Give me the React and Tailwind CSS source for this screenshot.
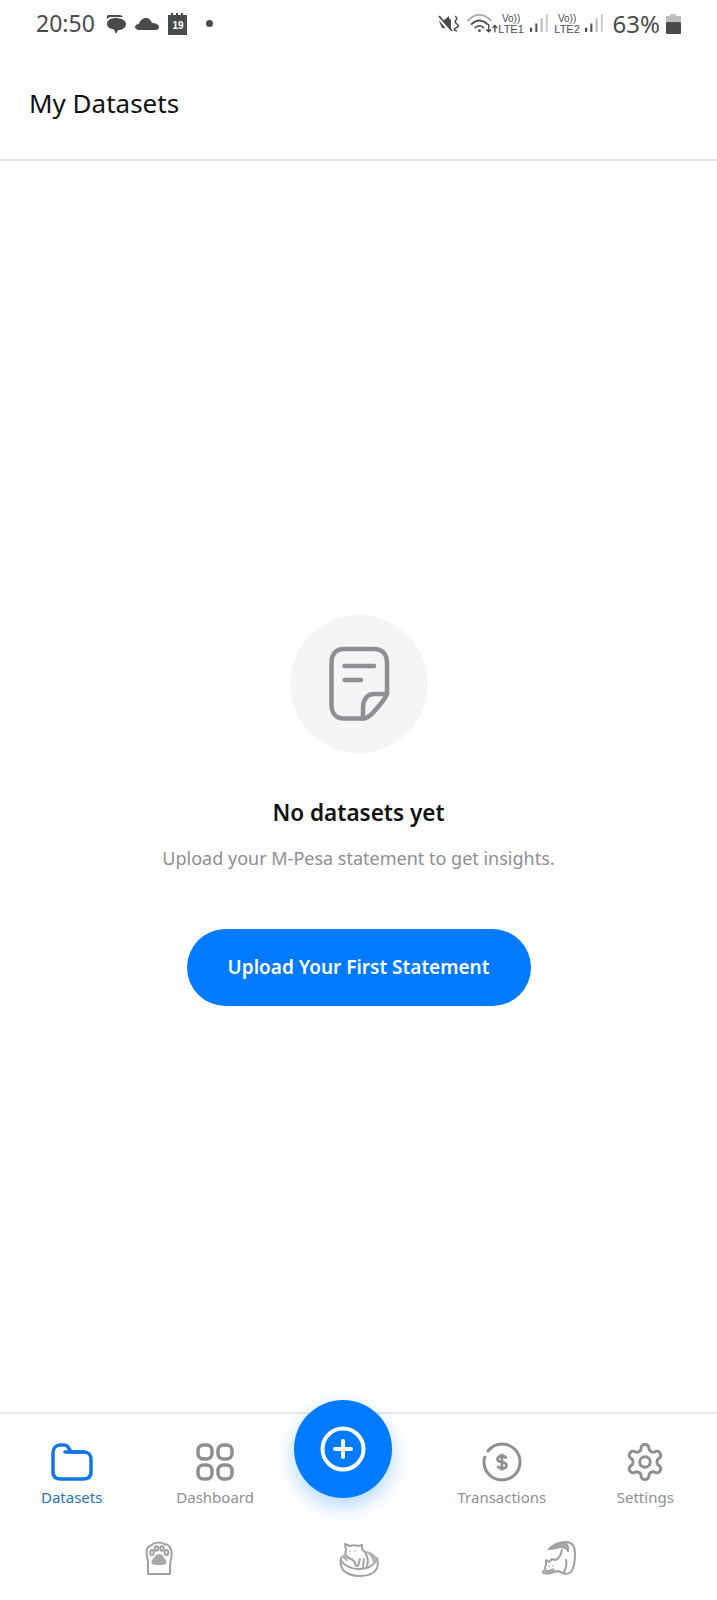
const font = "[font-family:'Noto_Sans',sans-serif]";

function Muted() {
  return (
    <svg width="22" height="20" viewBox="0 0 22 20">
      <path d="M1 7l4 0 6-5v2l2 2v12l-6-4H4z" fill="#4b4b4b" />
      <path d="M0 3l13 15" stroke="#fff" strokeWidth="3" />
      <path d="M1 2l13 15" stroke="#4b4b4b" strokeWidth="1.800" />
      <path d="M17 2q3 2 1 4t1 4-1 4 1 3" fill="none" stroke="#4b4b4b" strokeWidth="1.500" />
    </svg>
  );
}

function Wifi() {
  return (
    <svg width="31" height="21" viewBox="0 0 30 20" fill="none" strokeLinecap="round">
      <path d="M1 7C8 0 16 0 23 7" stroke="#a8a8a8" strokeWidth="1.800" />
      <path d="M4.500 10.500c5-4.500 10-4.500 15 0" stroke="#555" strokeWidth="1.800" />
      <path d="M8 14c3-2.500 5-2.500 8 0" stroke="#555" strokeWidth="1.800" />
      <circle cx="12" cy="17" r="1.400" fill="#555" />
      <path d="M21 11v7m-2-2 2 2 2-2" stroke="#444" strokeWidth="1.300" />
      <path d="M27 18v-6m-2 2 2-2 2 2" stroke="#444" strokeWidth="1.300" />
    </svg>
  );
}

function Signal() {
  return (
    <svg width="19" height="21" viewBox="0 0 18 20">
      <rect x="0" y="14" width="2" height="4" fill="#444" />
      <rect x="5" y="10" width="2" height="8" fill="#555" />
      <rect x="10" y="5" width="2" height="13" fill="#bbb" />
      <rect x="15" y="1" width="2" height="17" fill="#ccc" />
    </svg>
  );
}

function Vo({ n }) {
  return (
    <div className="flex w-[27px] flex-col items-center text-[11px] leading-[11px] text-[#4a4a4a] [font-family:'Liberation_Sans',sans-serif]">
      <span className="text-[10px]">Vo))</span>
      <span>{n}</span>
    </div>
  );
}

function Paw() {
  return (
    <svg width="30" height="36" viewBox="0 0 30 36" fill="none" stroke="#a0a0a0" strokeWidth="2">
      <path d="M4 33V20C1 10 3 5 8 4c2-3 9-3 12-1 6 0 9 6 7 15-1 3-1 4-1 15z" strokeLinejoin="round" />
      <ellipse cx="8" cy="11.500" rx="1.800" ry="2.600" />
      <ellipse cx="12.500" cy="7.500" rx="1.700" ry="2.200" />
      <ellipse cx="18" cy="7.500" rx="1.700" ry="2.200" />
      <ellipse cx="22.500" cy="11.500" rx="1.800" ry="2.600" />
      <path d="M15 13c4 0 4 3 6 5 3 3 1 6-3 6h-6c-4 0-6-3-3-6 2-2 2-5 6-5z" fill="#a8a8a8" stroke="none" />
    </svg>
  );
}

function CatBed() {
  return (
    <svg width="40" height="34" viewBox="0 0 40 34" fill="none" stroke="#a0a0a0" strokeWidth="2" strokeLinecap="round" strokeLinejoin="round">
      <path d="M2 15c-1 4 0 9 2 12 4 4 9 6 17 6 9 0 15-3 17-8 1-3 1-7 0-10" />
      <path d="M2 18c4 5 10 8 18 8 8 0 14-3 17-8" />
      <path d="M27 8c7 1 11 5 11 9l-4 5c0-6-3-11-9-13z" fill="#b4b4b4" stroke="none" />
      <path d="M7 7l-1-6 5 2c3-1 6-1 8 0l4-1 0 4c5 4 7 11 5 17" fill="#fff" />
      <path d="M7 7c-2 4 1 8 5 9 3 1 4 3 5 7" />
      <path d="M21 16l-2 7M25 16l-1 8" />
      <path d="M2 14c1-2 3-3 5-3l2 8z" fill="#b4b4b4" stroke="none" />
      <circle cx="11" cy="8" r=".8" fill="#999" stroke="none" />
      <circle cx="16" cy="8" r=".8" fill="#999" stroke="none" />
    </svg>
  );
}

function Cat() {
  return (
    <svg width="34" height="36" viewBox="0 0 34 36" fill="none" stroke="#a0a0a0" strokeWidth="2" strokeLinecap="round" strokeLinejoin="round">
      <path d="M7 8c4-4 10-7 17-7 6 0 9 4 9 12 0 7-1 14-4 18-3 2-6 2-8 1l-5-2-7 2c-3 1-5 1-6 0" />
      <path d="M7 8c4-3 10-6 15-6 3 1 5 3 4 8-2-3-4-4-6-4-4 0-9 2-13 2z" fill="#aaa" />
      <path d="M20 9c-1 5-3 9-7 10l-3-1-3 3-3-2v5c-2 3-1 6 2 7" />
      <path d="M1 31c3 1 6 0 10-2" strokeWidth="3.500" stroke="#a8a8a8" />
      <path d="M24 19c1 4 0 8-2 12" />
      <circle cx="7" cy="25" r=".8" fill="#999" stroke="none" />
      <circle cx="11" cy="25" r=".8" fill="#999" stroke="none" />
    </svg>
  );
}

function Tab({ label, active, children }) {
  return (
    <div className="flex flex-col items-center">
      <div className="flex h-[42px] items-center justify-center">{children}</div>
      <span className={`mt-[4px] text-[15px] leading-[20px] ${active ? "text-[#1f73c4]" : "text-[#8e8e93]"}`}>{label}</span>
    </div>
  );
}

export default function App() {
  return (
    <div className={`relative flex h-[1600px] w-[717px] flex-col overflow-hidden bg-white ${font}`}>
      <div className="flex h-[47px] items-center justify-between pl-[36px] pr-[36px] text-[#4a4a4a]">
        <div className="flex items-center">
          <span className="text-[23px] leading-none">20:50</span>
          <svg className="ml-[10px]" width="22" height="21" viewBox="0 0 22 21" fill="#4a4a4a">
            <path d="M3 2h11c3 0 4 2 4 2H6C4 4 2 6 2 6S1 3 3 2z" />
            <path d="M10 5c6 0 11 2 11 6s-4 6-8 6l-2 4-2-4.500C5 16 2 14 2 11s3-6 8-6z" />
          </svg>
          <svg className="ml-[8px]" width="24" height="14" viewBox="0 0 24 14" fill="#4a4a4a">
            <path d="M5 13C2 13 0 12 0 10c0-2 2-3 4-3 1-4 4-6 7-6 3 0 5 2 6 5 4 0 7 2 7 4 0 2-1 3-4 3z" />
          </svg>
          <svg className="ml-[9px]" width="20" height="22" viewBox="0 0 20 22">
            <path d="M0 2h3V0h2v2h3V0h2v2h3V0h2v2h4v20H0z" fill="#4a4a4a" />
            <text x="10" y="16" textAnchor="middle" fontSize="10" fontWeight="700" fill="#fff" fontFamily="Liberation Sans, sans-serif">19</text>
          </svg>
          <span className="ml-[18px] h-[7px] w-[7px] rounded-full bg-[#4a4a4a]"></span>
        </div>
        <div className="flex items-center">
          <Muted />
          <div className="ml-[7px]"><Wifi /></div>
          <Vo n="LTE1" />
          <div className="ml-[5px]"><Signal /></div>
          <div className="ml-[5px]"><Vo n="LTE2" /></div>
          <div className="ml-[4px]"><Signal /></div>
          <span className="ml-[9px] text-[24px] leading-none">63%</span>
          <svg className="ml-[6px]" width="15" height="20" viewBox="0 0 15 20">
            <rect x="4" y="0" width="6" height="3" fill="#c4c4c4" />
            <rect x="0" y="2" width="15" height="6" fill="#bdbdbd" />
            <rect x="0" y="8" width="15" height="12" rx="1" fill="#4a4a4a" />
          </svg>
        </div>
      </div>

      <div className="flex h-[114px] items-center border-b-2 border-[#e8e8e8] pb-[1px] pl-[29px]">
        <h1 className="text-[26px] leading-none text-[#111]">My Datasets</h1>
      </div>

      <main className="flex flex-1 flex-col items-center pt-[454px]">
        <div className="flex h-[138px] w-[138px] items-center justify-center rounded-full bg-[#f5f5f7]">
          <svg width="66" height="78" viewBox="0 0 66 78" fill="none" stroke="#8e8e93" strokeWidth="4.500" strokeLinecap="round" strokeLinejoin="round">
            <path d="M37 73.500H18C10 73.500 5.500 68 5.500 60V18C5.500 9 10 4 18 4H48c8 0 13 5 13 14V49" />
            <path d="M61 49H48C41 49 37 55 37 63v10.500c3 0 7-2 12-8s10-11 12-16.500z" />
            <path d="M18.500 21H48M18.500 35H35" strokeWidth="4.500" />
          </svg>
        </div>
        <h2 className="mt-[45px] text-[22.500px] font-semibold leading-[30px] text-[#111]">No datasets yet</h2>
        <p className="mt-[15px] text-[18px] leading-[30px] text-[#8e8e93]">Upload your M-Pesa statement to get insights.</p>
        <button className="mt-[56px] h-[77px] w-[344px] rounded-full bg-[#007aff] text-[19px] font-semibold text-white">Upload Your First Statement</button>
      </main>

      <nav className="border-t-2 border-[#e8e8e8] pt-[27px]">
        <div className="grid grid-cols-5">
          <Tab label="Datasets" active>
            <svg width="42" height="38" viewBox="0 0 42 38" fill="none" stroke="#1277e1" strokeWidth="3.500" strokeLinecap="round" strokeLinejoin="round">
              <path d="M2 10V29c0 5 3 7 8 7h22c5 0 8-2 8-7V16c0-4-3-7-7-7H20l-3-5c-1-2-3-2-5-2H9C5 2 2 5 2 10z" />
              <path d="M14 9h19" />
            </svg>
          </Tab>
          <Tab label="Dashboard">
            <svg width="38" height="38" viewBox="0 0 38 38" fill="none" stroke="#8e8e93" strokeWidth="3.500">
              <rect x="2" y="2" width="14" height="14" rx="5.500" />
              <rect x="22" y="2" width="14" height="14" rx="5.500" />
              <rect x="2" y="22" width="14" height="14" rx="5.500" />
              <rect x="22" y="22" width="14" height="14" rx="5.500" />
            </svg>
          </Tab>
          <div></div>
          <Tab label="Transactions">
            <svg width="40" height="40" viewBox="0 0 40 40" fill="none" stroke="#8e8e93" strokeWidth="3">
              <path d="M6 9C10 4 15 2 20 2c10 0 18 8 18 18s-8 18-18 18S2 30 2 20c0-2 0-4 1-5" strokeLinecap="round" />
              <path d="M24.500 16.500c-1-1.500-2.500-2.500-4.500-2.500-2.500 0-4.500 1.300-4.500 3.200s2 2.500 4.500 3 4.500 1.200 4.500 3-2 3.300-4.500 3.300c-2 0-3.500-1-4.500-2.500M20 11.500v17" strokeWidth="2.800" />
            </svg>
          </Tab>
          <Tab label="Settings">
            <svg width="42" height="42" viewBox="0 0 24 24" fill="none" stroke="#8e8e93" strokeWidth="1.700" strokeLinecap="round" strokeLinejoin="round">
              <path d="M12.220 2h-.44a2 2 0 0 0-2 2v.18a2 2 0 0 1-1 1.730l-.43.25a2 2 0 0 1-2 0l-.15-.08a2 2 0 0 0-2.730.73l-.22.38a2 2 0 0 0 .73 2.730l.15.1a2 2 0 0 1 1 1.720v.510a2 2 0 0 1-1 1.740l-.15.09a2 2 0 0 0-.73 2.730l.22.38a2 2 0 0 0 2.730.73l.15-.08a2 2 0 0 1 2 0l.43.25a2 2 0 0 1 1 1.730V20a2 2 0 0 0 2 2h.44a2 2 0 0 0 2-2v-.18a2 2 0 0 1 1-1.730l.43-.25a2 2 0 0 1 2 0l.15.08a2 2 0 0 0 2.730-.73l.22-.39a2 2 0 0 0-.73-2.730l-.15-.08a2 2 0 0 1-1-1.740v-.5a2 2 0 0 1 1-1.740l.15-.09a2 2 0 0 0 .73-2.730l-.22-.38a2 2 0 0 0-2.730-.73l-.15.08a2 2 0 0 1-2 0l-.43-.25a2 2 0 0 1-1-1.730V4a2 2 0 0 0-2-2z" />
              <circle cx="12" cy="12" r="3" />
            </svg>
          </Tab>
        </div>
        <div className="mt-[34px] flex h-[59px] items-start justify-center pl-[1px]">
          <div className="flex w-[200px] justify-center"><Paw /></div>
          <div className="flex w-[200px] justify-center pt-[2px]"><CatBed /></div>
          <div className="flex w-[200px] justify-center"><Cat /></div>
        </div>
      </nav>

      <button className="absolute left-[294px] top-[1400px] flex h-[98px] w-[98px] items-center justify-center rounded-full bg-[#007aff] shadow-[0_8px_20px_rgba(0,122,255,0.3)]">
        <svg width="46" height="46" viewBox="0 0 46 46" fill="none" stroke="#fff" strokeWidth="4" strokeLinecap="round">
          <circle cx="23" cy="23" r="20.500" />
          <path d="M23 15v16M15 23h16" />
        </svg>
      </button>
    </div>
  );
}
